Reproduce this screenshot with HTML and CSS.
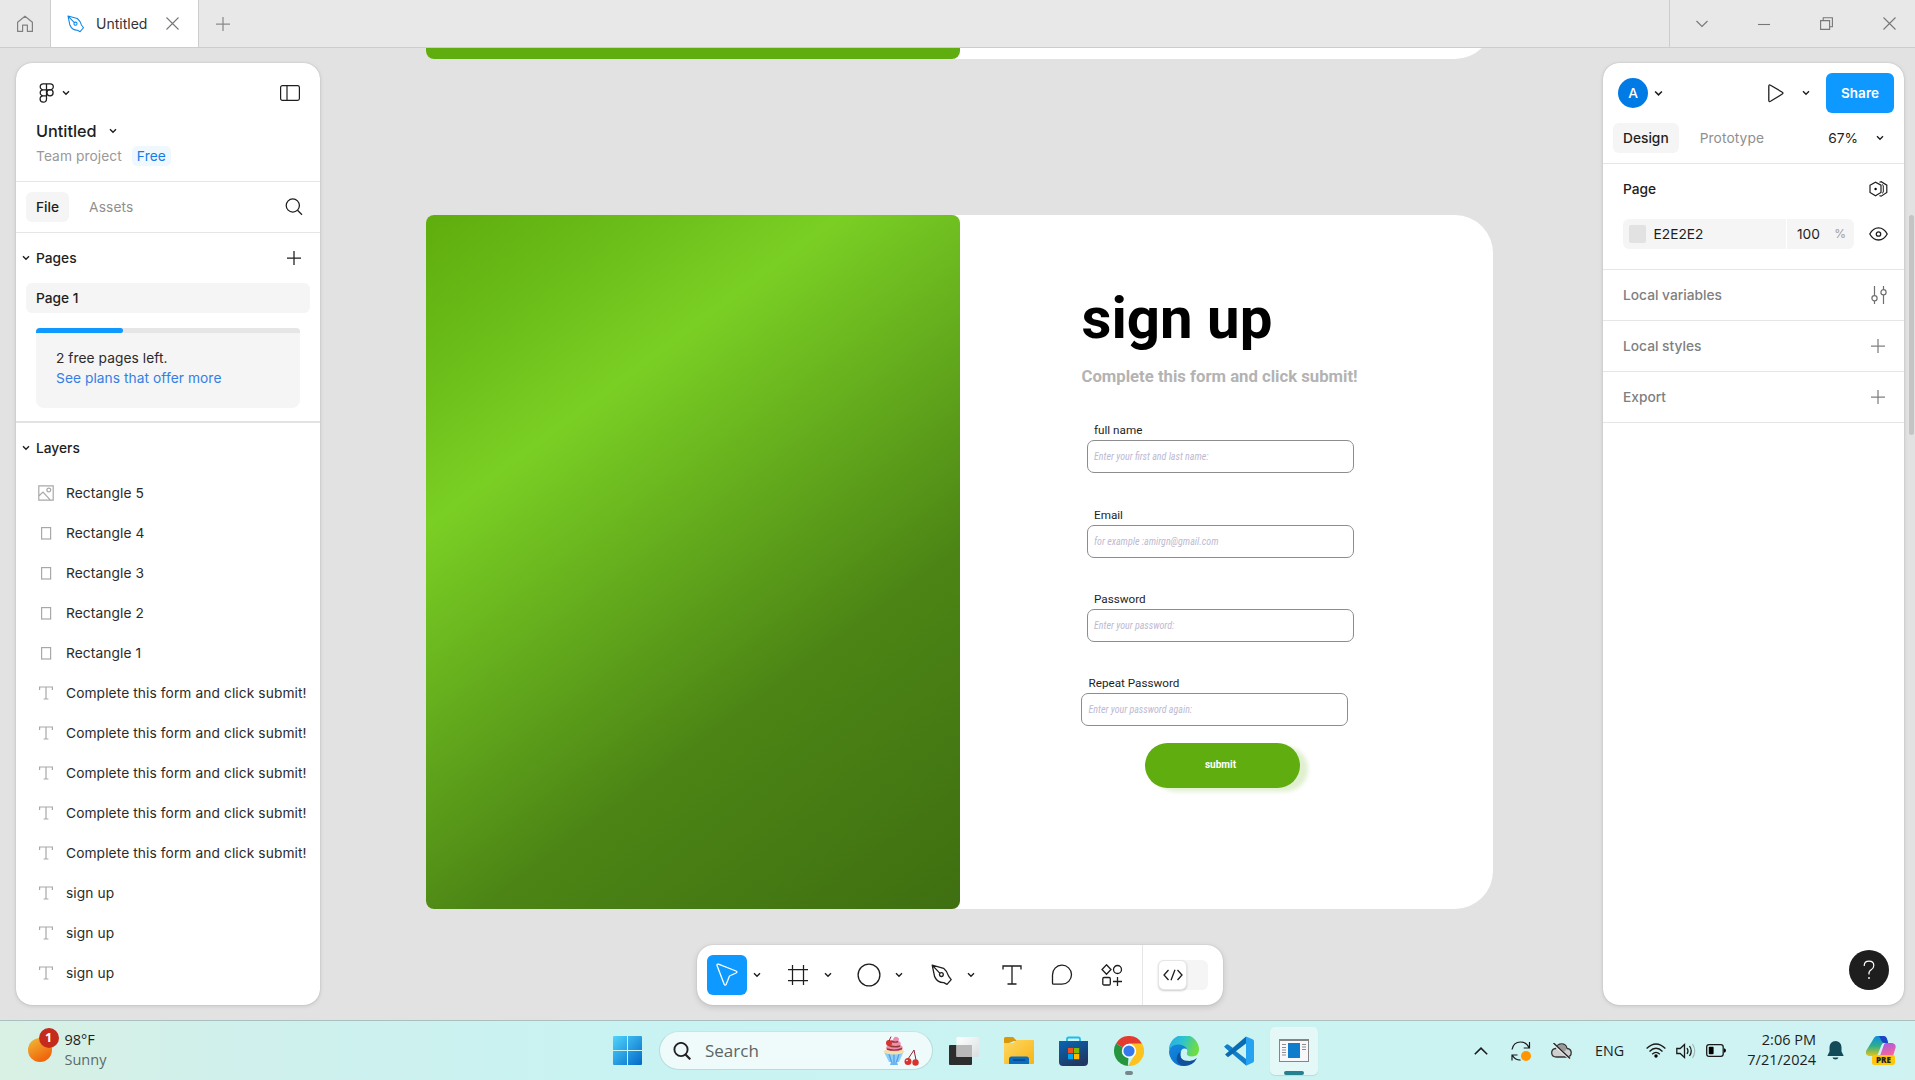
FILE: index.html
```html
<!DOCTYPE html>
<html lang="en">
<head>
<meta charset="utf-8">
<title>Untitled</title>
<link rel="stylesheet" href="styles.css">
</head>
<body>
<svg class="sprite" aria-hidden="true">
  <symbol id="chev" viewBox="0 0 8 6"><path d="M1 1.2 4 4.2 7 1.2" fill="none" stroke="currentColor" stroke-width="1.4"/></symbol>
  <symbol id="plus" viewBox="0 0 14 14"><path d="M7 0v14M0 7h14" fill="none" stroke="currentColor" stroke-width="1.25"/></symbol>
  <symbol id="rect" viewBox="0 0 16 16"><rect x="3.6" y="2.6" width="9" height="11.4" fill="none" stroke="currentColor" stroke-width="1.2"/></symbol>
  <symbol id="text" viewBox="0 0 16 16"><path d="M1.6 5V2h12.8v3M8 2v12M5.6 14h4.8" fill="none" stroke="currentColor" stroke-width="1.2"/></symbol>
  <symbol id="pen" viewBox="0 0 22 22"><path d="M1.2 1.2 12.6 4.3Q16.3 7.3 17.6 12.2L20.2 15.6 16 20.4 12.8 18.6Q6.500 18.8 3.600 12.600ZM1.600 1.600 9 9.400" fill="none" stroke="currentColor" stroke-width="1.3" stroke-linejoin="round"/><circle cx="10.4" cy="10.6" r="1.9" fill="none" stroke="currentColor" stroke-width="1.3"/></symbol>
</svg>

<header class="titlebar">
  <div class="home"><svg width="18" height="18" viewBox="0 0 18 18"><path d="M1.6 7.200 9 1.200l7.400 6v9.200h-5v-6.200H6.600v6.200h-5z" fill="none" stroke="#808080" stroke-width="1.2" stroke-linejoin="round"/></svg></div>
  <div class="filetab">
    <svg class="penblue" width="18" height="18"><use href="#pen"/></svg>
    <span>Untitled</span>
    <svg width="13" height="13" viewBox="0 0 13 13"><path d="m.5.5 12 12m0-12-12 12" stroke="#777" stroke-width="1.1"/></svg>
  </div>
  <div class="newtab"><svg width="14" height="14"><use href="#plus"/></svg></div>
  <div class="winctl">
    <svg width="12" height="8" viewBox="0 0 12 8"><path d="m.5 1 5.500 5.500L11.500 1" fill="none" stroke="#777" stroke-width="1.1"/></svg>
    <svg width="12" height="8" viewBox="0 0 12 8"><path d="M0 4.500h12" stroke="#777" stroke-width="1.1"/></svg>
    <svg width="13" height="13" viewBox="0 0 13 13"><path d="M.6 3.600h9v8.800h-9zM3.200 3.400V.7h9.200v9H9.800" fill="none" stroke="#777" stroke-width="1.100"/></svg>
    <svg width="13" height="13" viewBox="0 0 13 13"><path d="m.5.5 12 12m0-12-12 12" stroke="#777" stroke-width="1.1"/></svg>
  </div>
</header>

<main class="workspace">
  <aside class="panel left">
    <div class="filehead">
      <div class="brandrow">
        <svg width="16" height="20" viewBox="0 0 16 20"><g fill="none" stroke="#1e1e1e" stroke-width="1.250"><path d="M7.500.8H4.200a3 3 0 0 0 0 6h3.300zM7.500.8h3.800a3 3 0 0 1 0 6H7.500zM7.500 6.800H4.200a3 3 0 0 0 0 6h3.300zM7.500 12.800H4.200a3.200 3.200 0 1 0 3.300 3.200z"/><circle cx="11" cy="9.800" r="3.100"/></g></svg>
        <svg class="c" width="8" height="6"><use href="#chev"/></svg>
        <svg class="push" width="20" height="16" viewBox="0 0 20 16"><rect x=".6" y=".6" width="18.800" height="14.800" rx="1.800" fill="none" stroke="#1e1e1e" stroke-width="1.200"/><path d="M7 .6v14.800" stroke="#1e1e1e" stroke-width="1.200"/></svg>
      </div>
      <div class="filename"><span>Untitled</span><svg width="8" height="6"><use href="#chev"/></svg></div>
      <div class="project"><span>Team project</span><span class="free">Free</span></div>
    </div>
    <div class="tabs">
      <span class="tab on">File</span><span class="tab assets">Assets</span>
      <svg class="push" width="18" height="18" viewBox="0 0 18 18"><circle cx="7.800" cy="7.500" r="6.600" fill="none" stroke="#1e1e1e" stroke-width="1.250"/><path d="m12.500 12.300 4.500 4.500" stroke="#1e1e1e" stroke-width="1.250"/></svg>
    </div>
    <div class="pages">
      <div class="sect"><svg width="8" height="6"><use href="#chev"/></svg><span>Pages</span><svg class="push" width="14" height="14"><use href="#plus"/></svg></div>
      <div class="pagerow">Page 1</div>
      <div class="plan">
        <div class="bar"><div class="fill"></div></div>
        <p>2 free pages left.</p><p class="link">See plans that offer more</p>
      </div>
    </div>
    <div class="layers">
      <div class="sect"><svg width="8" height="6"><use href="#chev"/></svg><span>Layers</span></div>
      <ul>
        <li><svg width="16" height="16" viewBox="0 0 16 16"><g fill="none" stroke="currentColor" stroke-width="1.200"><path d="M.8.8h14.400v14.400H.8zM.8 11l4.200-4 7.400 8.200"/><circle cx="10.800" cy="5" r="1.900"/></g></svg><span>Rectangle 5</span></li>
        <li><svg width="16" height="16"><use href="#rect"/></svg><span>Rectangle 4</span></li>
        <li><svg width="16" height="16"><use href="#rect"/></svg><span>Rectangle 3</span></li>
        <li><svg width="16" height="16"><use href="#rect"/></svg><span>Rectangle 2</span></li>
        <li><svg width="16" height="16"><use href="#rect"/></svg><span>Rectangle 1</span></li>
        <li><svg width="16" height="16"><use href="#text"/></svg><span>Complete this form and click submit!</span></li>
        <li><svg width="16" height="16"><use href="#text"/></svg><span>Complete this form and click submit!</span></li>
        <li><svg width="16" height="16"><use href="#text"/></svg><span>Complete this form and click submit!</span></li>
        <li><svg width="16" height="16"><use href="#text"/></svg><span>Complete this form and click submit!</span></li>
        <li><svg width="16" height="16"><use href="#text"/></svg><span>Complete this form and click submit!</span></li>
        <li><svg width="16" height="16"><use href="#text"/></svg><span>sign up</span></li>
        <li><svg width="16" height="16"><use href="#text"/></svg><span>sign up</span></li>
        <li><svg width="16" height="16"><use href="#text"/></svg><span>sign up</span></li>
      </ul>
    </div>
  </aside>

  <section class="canvas">
    <div class="frame previous"><div class="cover plain"></div></div>
    <div class="frame signup">
      <div class="cover"></div>
      <div class="form">
        <h1>sign up</h1>
        <p class="sub">Complete this form and click submit!</p>
        <div class="field"><label>full name</label><div class="input">Enter your first and last name:</div></div>
        <div class="field"><label>Email</label><div class="input">for example :amirgn@gmail.com</div></div>
        <div class="field"><label>Password</label><div class="input">Enter your password:</div></div>
        <div class="field last"><label>Repeat Password</label><div class="input">Enter your password again:</div></div>
        <div class="submit">submit</div>
      </div>
    </div>
  </section>

  <aside class="panel right">
    <div class="top">
      <div class="userrow">
        <span class="avatar">A</span><svg width="9" height="7"><use href="#chev"/></svg>
        <svg class="play" width="16" height="19" viewBox="0 0 16 19"><path d="M.8 2.200q0-2 1.700-1l11.800 7q1.400.9 0 1.800l-11.800 7.300q-1.700.9-1.700-1z" fill="none" stroke="#1e1e1e" stroke-width="1.300"/></svg>
        <svg class="playchev" width="8" height="6"><use href="#chev"/></svg>
        <span class="share">Share</span>
      </div>
      <div class="moderow"><span class="tab on">Design</span><span class="tab">Prototype</span><span class="zoom">67%</span><svg width="8" height="6"><use href="#chev"/></svg></div>
    </div>
    <div class="pageprops">
      <div class="line"><span>Page</span><svg width="19" height="16" viewBox="0 0 19 16"><g fill="none" stroke="#1e1e1e" stroke-width="1.200"><path d="M1 4.200 6.500 1.200 12 4.200v7.300L6.500 14.800 1 11.500zM10.500 1.300l1.700-.6 5.600 3.500v7.300l-5.600 3.700-1.700-.6"/></g><path d="M13 3.500l1.300 1v6.800l-1.300 1" fill="none" stroke="#1e1e1e"/><circle cx="6.600" cy="8" r="1.200"/></svg></div>
      <div class="line">
        <div class="color"><i></i><span>E2E2E2</span></div><div class="alpha"><span>100</span><em>%</em></div>
        <svg width="19" height="14" viewBox="0 0 19 14"><g fill="none" stroke="#1e1e1e" stroke-width="1.300"><path d="M.8 7Q4 .8 9.500.8T18.200 7Q15 13 9.500 13T.8 7z"/><circle cx="9.500" cy="7" r="2.200"/></g></svg>
      </div>
    </div>
    <div class="prop"><span>Local variables</span><svg width="16" height="18" viewBox="0 0 16 18"><g fill="none" stroke="#6f6f6f" stroke-width="1.200"><path d="M3.500 0v9.500M3.500 15v3M12.500 0v3.500M12.500 9v9"/><circle cx="3.500" cy="12.200" r="2.600"/><circle cx="12.500" cy="6.200" r="2.600"/></g></svg></div>
    <div class="prop"><span>Local styles</span><svg width="14" height="14"><use href="#plus"/></svg></div>
    <div class="prop"><span>Export</span><svg width="14" height="14"><use href="#plus"/></svg></div>
    <div class="help"><svg width="12" height="20" viewBox="0 0 12 20"><path d="M1.200 6Q1.200 1.200 6 1.200t4.800 4.300Q10.800 8 8.200 9.700T6 13.800v.8" fill="none" stroke="#fff" stroke-width="1.200"/><circle cx="6" cy="18" r=".9" fill="#fff"/></svg></div>
  </aside>
  <div class="scrollthumb"></div>

  <nav class="tools">
    <span class="t sel"><svg width="22" height="24" viewBox="0 0 22 24"><path d="M1 2.500Q.8.8 2.500 1.200L20 8q1.900 1 0 2l-6.500 3-3.300 8.300q-1 1.600-2 0z" fill="none" stroke="#fff" stroke-width="1.300" stroke-linejoin="round"/></svg></span><span class="d"><svg width="8" height="6"><use href="#chev"/></svg></span>
    <span class="t"><svg width="20" height="20" viewBox="0 0 20 20"><path d="M4.500 0v20M15.500 0v20M0 4.500h20M0 15.500h20" stroke="#1e1e1e" stroke-width="1.250"/></svg></span><span class="d"><svg width="8" height="6"><use href="#chev"/></svg></span>
    <span class="t"><svg width="24" height="24" viewBox="0 0 24 24"><circle cx="12" cy="12" r="10.900" fill="none" stroke="#1e1e1e" stroke-width="1.300"/></svg></span><span class="d"><svg width="8" height="6"><use href="#chev"/></svg></span>
    <span class="t pentool"><svg width="22" height="22"><use href="#pen"/></svg></span><span class="d"><svg width="8" height="6"><use href="#chev"/></svg></span>
    <span class="t"><svg width="20" height="20" viewBox="0 0 20 20"><path d="M1 4.500V1h18v3.500M10 1v18M5.500 19h9" fill="none" stroke="#1e1e1e" stroke-width="1.300"/></svg></span>
    <span class="t next"><svg width="22" height="22" viewBox="0 0 22 22"><path d="M2.500 20.200q-1 0-1-1V11a9.500 9.500 0 1 1 9.500 9.200z" fill="none" stroke="#1e1e1e" stroke-width="1.300"/></svg></span>
    <span class="t next"><svg width="22" height="22" viewBox="0 0 22 22"><g fill="none" stroke="#1e1e1e" stroke-width="1.300"><path d="M5.500.8 10 5.500l-4.500 4.700L1 5.500zM16.500 13v9M12 17.500h9"/><circle cx="16.500" cy="5.500" r="4"/><rect x="1.800" y="13.500" width="7.500" height="7.500" rx="1.200"/></g></svg></span>
    <span class="dev"><span class="toggle"><i><svg width="20" height="12" viewBox="0 0 20 12"><path d="M5.500 1 1 6l4.500 5M14.500 1 19 6l-4.500 5M12 .8 8 11.200" fill="none" stroke="#1e1e1e" stroke-width="1.300"/></svg></i></span></span>
  </nav>
</main>

<footer class="taskbar">
  <div class="weather">
    <span class="sun"><b>1</b></span>
    <div class="temp"><p>98°F</p><p class="dim">Sunny</p></div>
  </div>
  <div class="apps">
    <svg width="29" height="29" viewBox="0 0 29 29"><defs><linearGradient id="win" x2="1" y2="1"><stop stop-color="#50d4fc"/><stop offset="1" stop-color="#0369c8"/></linearGradient></defs><path d="M1 0h13v14H0V1q0-1 1-1zM15 0h13q1 0 1 1v13H15zM0 15h14v14H1q-1 0-1-1zM15 15h14v13q0 1-1 1H15z" fill="url(#win)"/></svg>
    <div class="search">
      <svg width="18" height="18" viewBox="0 0 18 18"><circle cx="8" cy="7.500" r="6.600" fill="none" stroke="#222" stroke-width="1.900"/><path d="m12.500 12.500 4.800 4.800" stroke="#222" stroke-width="2.200"/></svg>
      <span>Search</span>
      <svg class="treat" width="36" height="30" viewBox="0 0 36 30"><path d="m1.500 17 4.500 9h10l4-9z" fill="#8fcdf8"/><path d="m6 18 2.500 8M11 18v8m5-8-2.500 8" stroke="#4a9ee5" stroke-width="1.200"/><path d="M8 26h6l1 3H7z" fill="#6eb6f0"/><ellipse cx="11" cy="15.500" rx="10.500" ry="3" fill="#f7dfa8"/><path d="M3 13q0-4 4-4-1-3 3-5 1-4 4-3 3 1 1.500 4 3 1 2 4 3.500 1.500 1.500 5-8 3-16-1z" fill="#f18cae"/><path d="M5 9q6 3 12 1M4 13q8 2.500 15-.5M8 5q4 2 7 .5" fill="none" stroke="#8d3c35" stroke-width="1.400"/><circle cx="6" cy="7" r="3" fill="#d8342f"/><path d="M6 5 8 .6M25 23l6-9 2 10" fill="none" stroke="#8c2734" stroke-width="1"/><circle cx="25" cy="25.500" r="3.500" fill="#d9322c"/><circle cx="32.500" cy="26.500" r="3.200" fill="#d9322c"/><circle cx="24" cy="24.500" r=".8" fill="#fff"/></svg>
    </div>
    <svg class="tv" width="30" height="28" viewBox="0 0 30 28"><defs><linearGradient id="tvw" x2="1" y2="1"><stop stop-color="#fff"/><stop offset="1" stop-color="#d9dfe0"/></linearGradient></defs><rect y="8" width="23" height="20" rx="1" fill="#2d2d2d"/><rect x="7.500" width="22.500" height="20" rx="1" fill="url(#tvw)"/><path d="M7.500 8H23v12H7.500z" fill="#b9b9b9"/></svg>
    <svg width="30" height="27" viewBox="0 0 30 27"><defs><linearGradient id="fol" x2="1" y2="1"><stop stop-color="#ffd962"/><stop offset="1" stop-color="#f7b316"/></linearGradient></defs><path d="M0 1.500Q0 0 1.500 0H9l4 4h-3L0 8z" fill="#d9980a"/><path d="M0 6h9l4-3h16q1 0 1 1v22q0 1-1 1H1q-1 0-1-1z" fill="url(#fol)"/><path d="M5 27v-5q0-2.500 2.500-2.500h15Q25 19.500 25 22v5z" fill="#0b6dbd"/><path d="M9 23h12" stroke="#063e82" stroke-width="1.300"/></svg>
    <svg width="29" height="30" viewBox="0 0 29 30"><defs><linearGradient id="sto" x2=".5" y2="1"><stop stop-color="#0766b5"/><stop offset="1" stop-color="#203864"/></linearGradient></defs><path d="M8 6V3q0-1.500 1.500-1.500h10Q21 1.500 21 3v3" fill="none" stroke="#1fbdee" stroke-width="1.800"/><path d="M0 5h29v21q0 4-4 4H4q-4 0-4-4z" fill="url(#sto)"/><path fill="#f25022" d="M9 12h5.200v5.200H9z"/><path fill="#7fba00" d="M15 12h5.200v5.200H15z"/><path fill="#00a4ef" d="M9 18h5.200v5.200H9z"/><path fill="#ffb900" d="M15 18h5.200v5.200H15z"/></svg>
    <span class="app chrome"><svg width="30" height="30" viewBox="0 0 30 30"><path d="M15 15 2 7.500a15 15 0 0 1 26 0z" fill="#e33b2e"/><path d="M15 15 13.800 30A15 15 0 0 1 2 7.500z" fill="#25963f"/><path d="M15 15 15 7.500H28A15 15 0 0 1 13.800 30l7.700-12z" fill="#fcc31e"/><circle cx="15" cy="15" r="7.200" fill="#fff"/><circle cx="15" cy="15" r="5.600" fill="#3579ef"/></svg><i></i></span>
    <svg width="30" height="30" viewBox="0 0 30 30"><defs><linearGradient id="edg" x2="1" y2=".3"><stop stop-color="#2aa8e8"/><stop offset=".5" stop-color="#2dc3cf"/><stop offset="1" stop-color="#6edc45"/></linearGradient><linearGradient id="edb" x2=".5" y2="1"><stop stop-color="#1687dd"/><stop offset="1" stop-color="#0a73cf"/></linearGradient></defs><path d="M0 14A15 15 0 0 1 30 13.500Q30 20 23 20.500q-6 0-5-4 1-2-1-4-6-6-17 1.500z" fill="url(#edg)"/><path d="M0 15Q2 8 10 8.500q6 .5 8 4.500-6-2-6.500 5T21 28Q17 30 13 30A15 15 0 0 1 0 15z" fill="url(#edb)"/><path d="M11.500 16q-2 9 9 9 4 0 7.500-3Q24 30 15 30 6 28 8 20q1-3 3.500-4z" fill="#11509a"/></svg>
    <svg width="30" height="30" viewBox="0 0 30 30"><path d="m1 11.500 3-2.500L22 23v6.500z" fill="#1180c8"/><path d="m1 18.500 3 2.700L22 7.500V.5z" fill="#0a6bb2"/><path d="m0 10.700 2.500-2.200q1-.6 2 .2L9 12l-4 3z" fill="#1180c8"/><path d="M22 .5 28.500 3.200q1.500.7 1.500 2v19.600q0 1.300-1.500 2L22 29.700z" fill="#25a3f2"/></svg>
    <span class="app active"><svg width="30" height="23" viewBox="0 0 30 23"><path d="M0 0h30v23H0z" fill="#858585"/><path d="M1 2h28v20H1z" fill="#f8f8fc"/><path d="M9 4h12v15H9z" fill="#0f7dcc"/><path d="M3 5.500h4M3 8.500h4M3 11h4M3 13.500h4M3 16h4M23 5.500h4M23 8h4M23 10.500h4" stroke="#8b8b90"/></svg><i></i></span>
  </div>
  <div class="tray">
    <svg class="up" width="14" height="8" viewBox="0 0 14 8"><path d="m.8 7.200 6.200-6 6.200 6" fill="none" stroke="#1b1b1b" stroke-width="1.600"/></svg>
    <svg class="sync" width="20" height="20" viewBox="0 0 20 20"><path d="M1 8.500Q2.500 1 9.500 1q6 0 8.500 5.500M18.500 1v6h-5.800M1 19.500V14h5.500M1.500 14.500Q4 19 9.500 19.200" fill="none" stroke="#1b1b1b" stroke-width="1.200"/><circle cx="15" cy="15" r="5" fill="#ff9500"/></svg>
    <svg class="cloud" width="21" height="16" viewBox="0 0 21 16"><path d="M5.500 14q-4.600 0-4.800-4t4-4.500Q6.500.9 10.500.9q4.500 0 5.500 4.600 4.200.3 4.200 4.300T16 14z" fill="#cfcfcf" stroke="#333" stroke-width="1.300"/><path d="M5 5.500q2-4 6-3.800 3.500.3 4.500 4L14 8.500z" fill="#999"/><path d="m2.500 1 16 14.500" stroke="#eee" stroke-width="2.400"/><path d="m2.500 0 16.500 15.500" stroke="#222" stroke-width="1.400"/></svg>
    <span class="lang">ENG</span>
    <svg class="wifi" width="20" height="15" viewBox="0 0 20 15"><g fill="none" stroke="#1b1b1b" stroke-width="1.300"><path d="M.6 5.500q9.400-9 18.800 0M3.500 8.500q6.500-6.500 13 0M6.200 11.200q3.800-3.700 7.600 0"/></g><circle cx="10" cy="13" r="1.700"/></svg>
    <svg class="vol" width="20" height="16" viewBox="0 0 20 16"><path d="M.8 5.500h3.400L8.500 1.500v13L4.200 10.500H.8zM11 5q2 3 0 6M13.500 3q3.500 5 0 10" fill="none" stroke="#1b1b1b" stroke-width="1.300"/><path d="M16.500 1q4.500 7 0 14" fill="none" stroke="#9fb5b6" stroke-width="1.100"/></svg>
    <svg class="bat" width="20" height="13" viewBox="0 0 20 13"><rect x=".7" y=".7" width="16.500" height="11.600" rx="2.400" fill="none" stroke="#1b1b1b" stroke-width="1.300"/><rect x="2.800" y="2.800" width="4.800" height="7.400" rx=".8"/><path d="M18 4.300q2 .2 2 2.200t-2 2.200z"/></svg>
    <div class="clock"><p>2:06 PM</p><p>7/21/2024</p></div>
    <svg class="bell" width="17" height="19" viewBox="0 0 17 19"><path d="M8.500 0Q14 .5 14.500 6v4.500l2 4V15H.5v-.5l2-4V6Q3 .5 8.500 0zM5.500 16.500h6q-.5 2-3 2t-3-2z" fill="#134c59"/></svg>
    <svg class="copilot" width="30" height="29" viewBox="0 0 30 29"><defs><linearGradient id="cpa" x2="0" y2="1"><stop stop-color="#0d8ee0"/><stop offset=".5" stop-color="#2fae8c"/><stop offset="1" stop-color="#e3c616"/></linearGradient><linearGradient id="cpb" x2=".3" y2="1"><stop stop-color="#a35be8"/><stop offset="1" stop-color="#f6659a"/></linearGradient></defs><path d="M8 2q1-2 3-2h6q3 0 4 3l1 4h-4q-2 0-3 3l-3 8q-1 2-3 2H3q-4-1-3-5z" fill="url(#cpa)"/><path d="M13 0h4.500Q20 0 21 3l1.200 4H18q-2 0-3-3z" fill="#1b44c7"/><path d="M18 8.500q.5-1.500 2-1.500h6q4.500 1 3.500 5l-2.500 8H15q-1 0-.5-1.500z" fill="url(#cpb)"/><rect x="6" y="19" width="23" height="10" rx="2.500" fill="#ffc60a"/><text x="17.500" y="27" text-anchor="middle" class="pre">PRE</text></svg>
  </div>
</footer>
</body>
</html>
```
FILE: styles.css
```css
* { box-sizing: border-box; margin: 0; padding: 0; }
body { width: 1915px; height: 1080px; overflow: hidden; display: flex; flex-direction: column; background: #e2e2e2; color: #1e1e1e; font: 13.75px/20px Inter, "Liberation Sans", sans-serif; }
svg { display: block; flex: none; }
.sprite { position: absolute; width: 0; height: 0; }
.push { margin-left: auto; }

.titlebar { flex: none; height: 48px; display: flex; background: #e8e8e8; border-bottom: 1px solid #cdcdcd; }
.home { width: 51px; border-right: 1px solid #cdcdcd; display: flex; align-items: center; justify-content: center; }
.filetab { width: 148px; background: #fff; border-right: 1px solid #cdcdcd; display: flex; align-items: center; padding: 0 19px 0 16px; font-size: 14px; color: #333; }
.filetab span { margin: 0 auto 0 11px; }
.penblue { color: #0d87e8; }
.newtab { display: flex; align-items: center; padding-left: 17px; color: #8a8a8a; }
.winctl { margin-left: auto; width: 246px; border-left: 1px solid #cdcdcd; display: flex; align-items: center; justify-content: space-between; padding: 0 19px 0 26px; }

.workspace { flex: none; height: 972px; position: relative; display: flex; padding: 15px 11px 15px 16px; }
.panel { position: relative; z-index: 1; flex: none; background: #fff; border-radius: 16px; box-shadow: 0 0 1px rgba(0,0,0,.25), 0 1px 4px rgba(0,0,0,.13); }
.left { width: 304px; }
.filehead { height: 119px; border-bottom: 1px solid #e6e6e6; padding: 19px 20px 0; }
.brandrow { height: 22px; display: flex; align-items: center; padding-left: 3px; }
.brandrow .c { margin-left: 7px; }
.filename { display: flex; align-items: center; gap: 12px; margin-top: 17px; font-size: 16.25px; font-weight: 500; }
.project { display: flex; align-items: center; gap: 10px; margin-top: 5px; color: #999; letter-spacing: .08px; }
.free { background: #f0f8ff; color: #157be8; padding: 0 5px; border-radius: 5px; }
.tabs { height: 51px; border-bottom: 1px solid #e6e6e6; display: flex; align-items: center; padding: 0 17px 0 10px; }
.tab { height: 30px; line-height: 30px; padding: 0 10px; color: #8f8f8f; border-radius: 6px; letter-spacing: .1px; }
.tab.on { background: #f5f5f5; color: #1e1e1e; font-weight: 500; letter-spacing: 0; }
.tab.assets { margin-left: 10px; }
.pages { height: 190px; border-bottom: 2px solid #e3e3e3; }
.sect { height: 50px; display: flex; align-items: center; padding: 0 19px 0 6px; font-weight: 500; }
.sect span { margin-left: 6px; }
.pagerow { height: 30px; margin: 0 10px; padding-left: 10px; line-height: 30px; background: #f5f5f5; border-radius: 6px; font-weight: 500; }
.plan { height: 80px; margin: 15px 20px 0; background: #f5f5f5; border-radius: 4px 4px 8px 8px; overflow: hidden; }
.plan .bar { height: 5px; background: #e6e6e6; margin-bottom: 15px; }
.plan .fill { width: 33%; height: 5px; background: #0d99ff; border-radius: 0 4px 4px 0; }
.plan p { padding-left: 20px; letter-spacing: .06px; color: #2b2b2b; }
.plan .link { color: #347fe6; }
ul { list-style: none; }
li { height: 40px; display: flex; align-items: center; gap: 12px; padding-left: 22px; color: #a8a8a8; white-space: nowrap; }
li span { color: #2b2b2b; letter-spacing: .095px; }

.canvas { position: absolute; inset: 0; overflow: hidden; }
.frame { position: absolute; left: 426px; width: 1067px; background: #fff; border-radius: 8px 38px 38px 8px; display: flex; }
.previous { top: -682px; height: 693px; }
.signup { top: 167px; height: 693.500px; }
.cover { flex: none; width: 533.500px; border-radius: 8px; background: linear-gradient(143.100deg, #5fad0e 0%, #6abc18 14%, #7acf24 28.400%, #4c8515 67%, #3f6f11 100%); }
.cover.plain { background: #60ad0f; }
.form { padding: 68px 0 0 122px; font-family: Roboto, sans-serif; }
h1 { font-size: 58.200px; line-height: 70px; color: #000; white-space: nowrap; }
.sub { margin-top: 14px; font-size: 16.690px; line-height: 20px; font-weight: 700; color: #b3b3b3; white-space: nowrap; }
.field { margin: 0 0 34.250px 5px; width: 267px; }
.sub + .field { margin-top: 36.400px; }
.field label { display: block; height: 17px; line-height: 14px; font-size: 11.700px; padding-left: 7.500px; }
.input { height: 33px; line-height: 31px; border: 1px solid #8d8d8d; border-radius: 7px; padding-left: 6.500px; font-size: 10px; font-style: italic; font-stretch: 75%; color: #bdbad2; white-space: nowrap; }
.field.last { margin: 0 0 17px -.5px; }
.submit { margin-left: 63.500px; width: 155px; height: 45px; line-height: 43px; border-radius: 23px; background: #60ad0f; box-shadow: 8px 3.500px 4px rgba(96,173,15,.2); color: #fff; text-align: center; font-size: 10px; font-weight: 700; padding-right: 4px; }

.right { width: 301px; margin-left: auto; display: flex; flex-direction: column; }
.top { height: 101px; border-bottom: 1px solid #e6e6e6; padding: 10px 10px 0; }
.userrow { height: 40px; display: flex; align-items: center; padding-left: 5px; }
.avatar { width: 30px; height: 30px; margin-right: 6px; border-radius: 50%; background: #007be5; color: #fff; text-align: center; line-height: 30px; font-weight: 500; }
.play { margin-left: 105px; }
.playchev { margin-left: 18px; }
.share { margin-left: auto; width: 68px; height: 40px; line-height: 40px; border-radius: 6px; background: #0d99ff; color: #fff; text-align: center; font-weight: 600; font-size: 13.500px; }
.moderow { display: flex; align-items: center; margin-top: 10px; }
.moderow .tab + .tab { margin-left: 11px; }
.zoom { margin: 0 18px 0 auto; }
.moderow svg { margin-right: 10px; }
.pageprops { height: 106px; border-bottom: 1px solid #e6e6e6; padding: 10px 16px 0 20px; }
.line { display: flex; align-items: center; height: 30px; font-weight: 500; }
.line + .line { margin-top: 15px; font-weight: 400; }
.line > svg { margin-left: auto; }
.color { width: 163px; height: 30px; background: #f5f5f5; border-radius: 6px 0 0 6px; display: flex; align-items: center; padding-left: 6px; gap: 7.500px; }
.color i { width: 17px; height: 18px; background: #e2e2e2; border-radius: 2px; }
.alpha { width: 67px; height: 30px; margin-left: 1px; background: #f5f5f5; border-radius: 0 6px 6px 0; display: flex; align-items: center; justify-content: space-between; padding: 0 8px 0 10px; }
.alpha em { font-style: normal; font-size: 12px; color: #9b9b9b; }
.prop { height: 51px; border-bottom: 1px solid #e6e6e6; display: flex; align-items: center; justify-content: space-between; padding: 0 19px 0 20px; color: #808080; font-weight: 500; }
.prop svg[width="16"] { margin-right: -2px; }
.help { margin: auto 15px 15px auto; width: 40px; height: 40px; border-radius: 50%; background: #1e1e1e; display: flex; align-items: center; justify-content: center; }
.scrollthumb { position: absolute; right: 1px; top: 167px; width: 5px; height: 220px; border-radius: 3px; background: #c4c4c4; }

.tools { position: absolute; z-index: 2; left: 697px; top: 897px; width: 526px; height: 60px; padding-left: 10px; display: flex; align-items: center; background: #fff; border-radius: 16px; box-shadow: 0 0 1px rgba(0,0,0,.25), 0 2px 6px rgba(0,0,0,.15); }
.t { width: 40px; height: 40px; display: flex; align-items: center; justify-content: center; border-radius: 6px; }
.t.sel { background: #0d99ff; }
.t.pentool { padding-left: 3px; }
.pentool + .d { width: 22px; padding-right: 0; }
.d { width: 21px; padding-right: 1.500px; margin-right: 10px; display: flex; justify-content: center; }
.next { margin-left: 10px; }
.dev { margin-left: 10px; height: 60px; width: 80px; border-left: 1px solid #e6e6e6; display: flex; align-items: center; padding-left: 15px; }
.toggle { width: 50px; height: 30px; background: #f5f5f5; border-radius: 6px; }
.toggle i { width: 29px; height: 30px; background: #fff; border: 1px solid #e6e6e6; border-radius: 6px; box-shadow: 0 1px 2px rgba(0,0,0,.2); display: flex; align-items: center; justify-content: center; }

.taskbar { flex: none; height: 60px; border-top: 1px solid #a9bfc0; background: linear-gradient(90deg, #d9f0e4 0%, #d0f0ec 12%, #c9f3f2 30%, #cbf3f2 75%, #d0f3f2 100%); display: flex; align-items: center; font: 14.500px/20px "Open Sans", "Noto Sans", sans-serif; }
.weather { display: flex; width: 585px; padding-left: 28px; gap: 12.500px; }
.temp, .clock { padding-bottom: 2px; }
.sun { position: relative; width: 24px; height: 24px; margin-top: 8px; border-radius: 50%; background: linear-gradient(150deg, #f0b232 10%, #f0660c 80%); }
.sun b { position: absolute; left: 10.500px; top: -10px; width: 20px; height: 20px; border-radius: 50%; background: #c42b1c; color: #fff; font-size: 12.500px; text-align: center; }
.dim { color: #5b6b6a; }
.apps { display: flex; align-items: center; gap: 25px; padding-left: 28px; }
.search { width: 274px; height: 39px; margin: 0 -10px 0 -8px; border-radius: 20px; background: #effbfb; border: 1px solid #b6dcdc; border-top-color: #c6e6e6; display: flex; align-items: center; padding: 0 13px; font-size: 17px; color: #5b6464; }
.search span { margin-left: 14px; }
.treat { margin-left: auto; }
.tv { margin-left: 1px; }
.chrome { margin-left: 1px; }
.app { position: relative; }
.app i { position: absolute; left: 11px; bottom: -9px; width: 8px; height: 4px; border-radius: 2px; background: #76898a; }
.app.active { width: 48px; height: 48px; margin-left: -9px; background: #e4f8f8; border-radius: 5px; display: flex; align-items: center; justify-content: center; box-shadow: 0 1px 1px rgba(0,0,0,.1); }
.app.active i { left: 14px; bottom: 0; width: 20px; background: #25808f; }
.tray { margin-left: auto; display: flex; align-items: center; padding-right: 19px; }
.sync { margin-left: 23px; }
.cloud { margin-left: 20px; }
.lang { margin-left: 23px; width: 29px; font-size: 14.300px; }
.wifi { margin-left: 22px; }
.vol { margin-left: 10px; }
.bat { margin-left: 10px; }
.clock { width: 90px; text-align: right; }
.bell { margin-left: 11px; }
.copilot { margin-left: 22px; }
.pre { font: 800 8px "Open Sans", sans-serif; fill: #222; }
```
